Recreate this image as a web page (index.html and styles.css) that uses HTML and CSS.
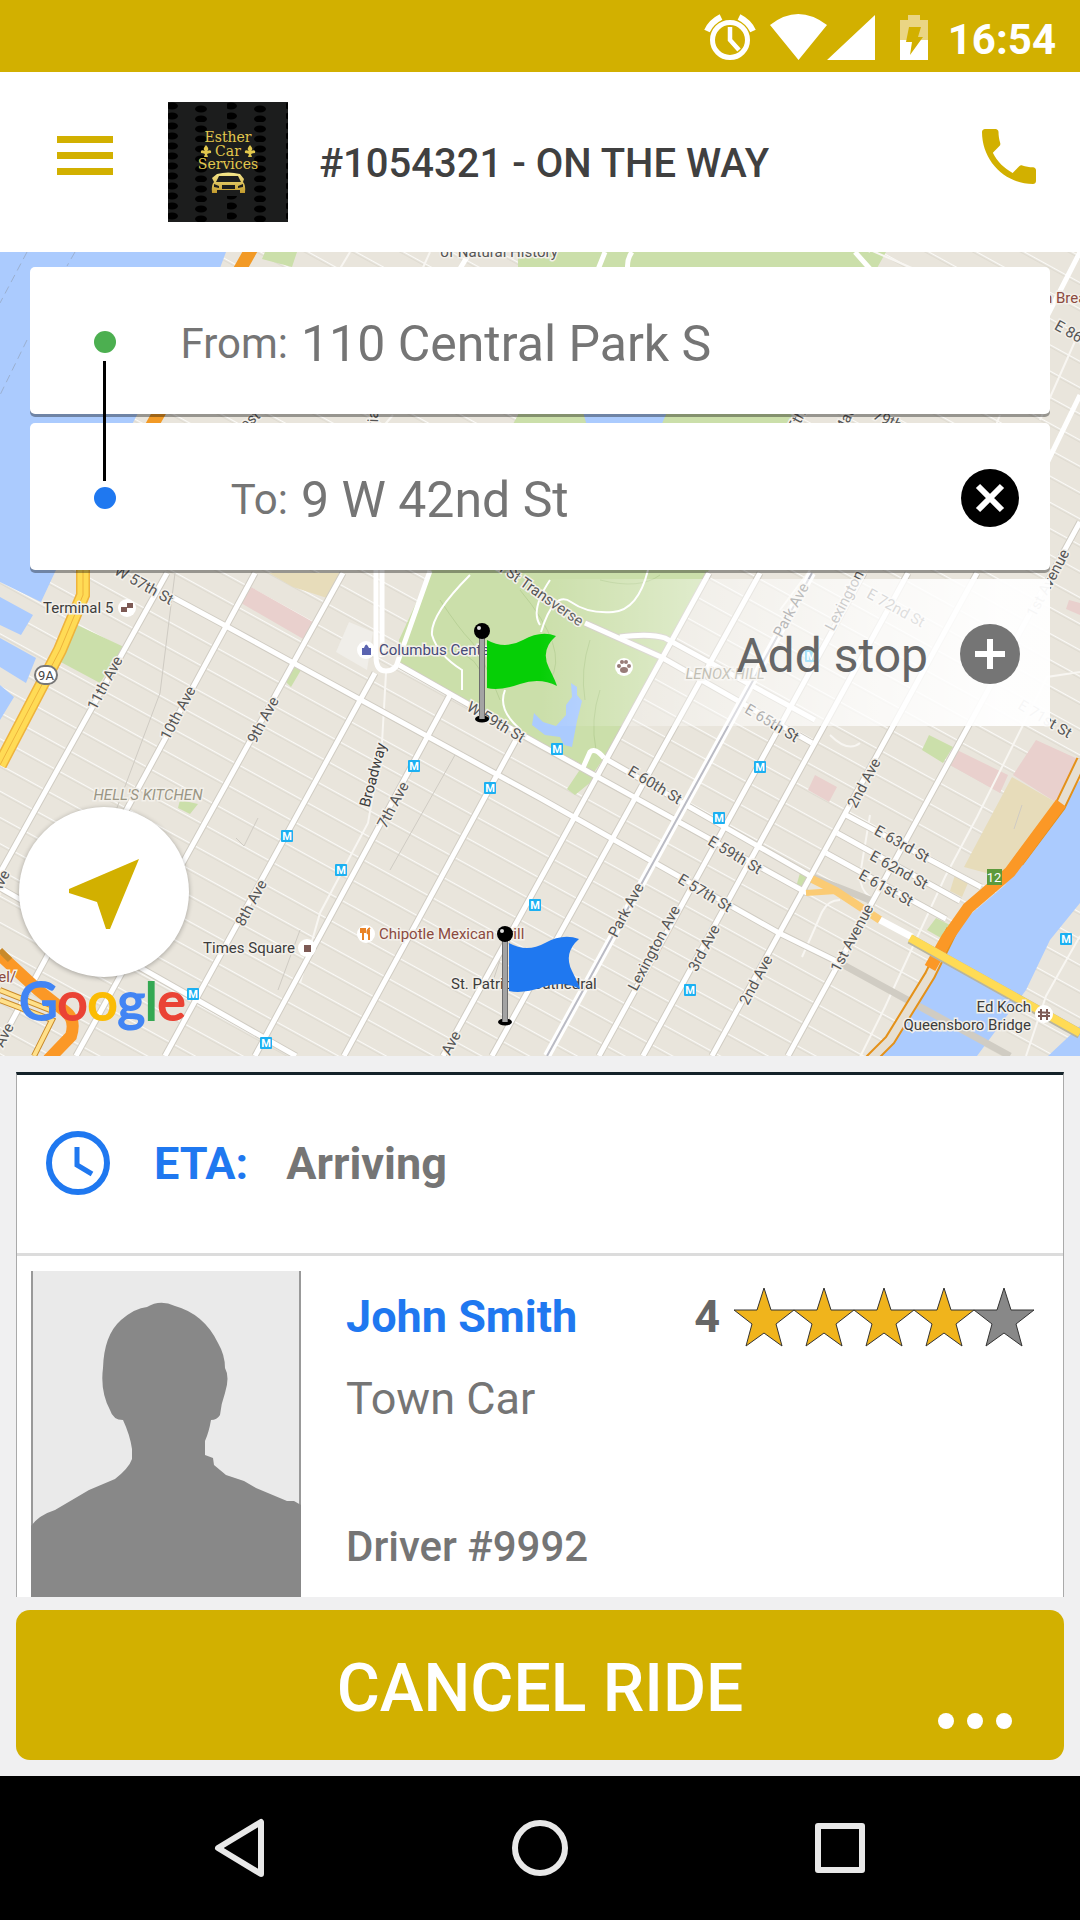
FILE: index.html
```html
<!DOCTYPE html>
<html lang="en">
<head>
  <meta charset="UTF-8">
  <meta name="viewport" content="width=device-width, initial-scale=1">
  <title>Esther Car Services - On the way</title>
  <link rel="stylesheet" href="styles.css">
</head>
<body>
  <div class="status-bar">
    <svg width="52" height="48" viewBox="0 0 52 48" fill="none" stroke="#fff">
      <circle cx="26" cy="27" r="17.500" stroke-width="5"/>
      <path d="M26 14v13l9 10" stroke-width="4.500"/>
      <path d="M3 18Q7 9 17 4M49 18Q45 9 35 4" stroke-width="6"/>
    </svg>
    <svg width="106" height="48" viewBox="0 0 106 48" fill="#fff">
      <path d="M0 12Q28-10 57 12L28.500 47zM57 47L105 2v45z"/>
    </svg>
    <svg class="battery" width="28" height="48" viewBox="0 0 28 48">
      <path d="M0 7h8V2h12v5h8v20H0z" fill="#ead584"/>
      <path d="M0 27h28v20H0z" fill="#fff"/>
      <path d="M9 14h12l-3 10h5L10 42l2-13H6z" fill="#d2b000"/>
    </svg>
    <span class="time">16:54</span>
  </div>

  <header>
    <button class="menu-btn" aria-label="Menu"><span></span><span></span><span></span></button>
    <svg class="brand" viewBox="0 0 120 120" role="img" aria-label="Esther Car Services">
      <defs>
        <pattern id="dots" width="59" height="20" patternUnits="userSpaceOnUse">
          <ellipse cx="4" cy="4" rx="6" ry="3.500"/>
          <ellipse cx="4" cy="14" rx="6" ry="3.500"/>
          <ellipse cx="33" cy="7" rx="6" ry="3.500"/>
          <ellipse cx="33" cy="17" rx="6" ry="3.500"/>
        </pattern>
        <linearGradient id="gold" x1="0" y1="0" x2="0" y2="1">
          <stop offset="0" stop-color="#f7e98e"/>
          <stop offset="1" stop-color="#c29a2c"/>
        </linearGradient>
      </defs>
      <rect width="120" height="120" fill="#1c1d1d"/>
      <rect width="120" height="120" fill="url(#dots)"/>
      <rect x="42" y="28" width="38" height="66" fill="#1c1d1d"/>
      <g class="brand-text" fill="#e3c84d" text-anchor="middle">
        <text x="60" y="40">Esther</text>
        <text x="60" y="54">Car</text>
        <text x="60" y="67">Services</text>
      </g>
      <g fill="#e3c84d">
        <path d="M38 43q4 4 1 6 5-2 4 2-2 0-4 1l1 3h-4l1-3q-2-1-4-1-1-4 4-2-3-2 1-6zM82 43q4 4 1 6 5-2 4 2-2 0-4 1l1 3h-4l1-3q-2-1-4-1-1-4 4-2-3-2 1-6z"/>
      </g>
      <path d="M49 72Q60 69 72 72L76 77 75 80Q78 83 77 91H72V88H49V91H44Q43 83 46 80L44 76zM51 74 48 80H73L70 74z" fill="url(#gold)" fill-rule="evenodd"/>
      <path d="M54 83h13v4H54zM46 82l5 2v2l-5-1zM75 82l-5 2v2l5-1z" fill="#1c1d1d"/>
    </svg>
    <h1>#1054321 - ON THE WAY</h1>
    <button class="call-btn" aria-label="Call driver">
      <svg width="54" height="55" viewBox="3 3 18 18" preserveAspectRatio="none" fill="#d2b000">
        <path d="M6.620 10.790c1.440 2.830 3.760 5.140 6.590 6.590l2.200-2.200c.27-.27.67-.36 1.020-.24 1.120.37 2.330.57 3.570.57.55 0 1 .45 1 1V20c0 .55-.45 1-1 1-9.390 0-17-7.610-17-17 0-.55.45-1 1-1h3.500c.55 0 1 .45 1 1 0 1.250.2 2.450.57 3.570.11.35.03.74-.25 1.020l-2.200 2.200z"/>
      </svg>
    </button>
  </header>

  <main class="map">
    <svg class="map-canvas" viewBox="0 252 1080 804" preserveAspectRatio="xMidYMid slice">
      <defs>
        <pattern id="streets" width="400" height="23" patternUnits="userSpaceOnUse" patternTransform="translate(224 625) rotate(28.8)">
          <path d="M0 1h400" stroke="#d6d1c6" stroke-width="3"/>
          <path d="M0 0.500h400" stroke="#fbfaf7" stroke-width="2"/>
        </pattern>
        <g id="metro">
          <rect x="-6" y="-6" width="12" height="12" rx="1" fill="#1cb0f2"/>
          <text class="metro-m" y="4" text-anchor="middle">M</text>
        </g>
        <g id="pin">
          <ellipse cy="88" rx="7" ry="3.500"/>
          <path d="M-3 5h5v83h-5z" fill="#a3a3a3"/>
          <path d="M-3 5h1v83h-1zM2 5h1v83h-1z" fill="#6e6e6e"/>
          <circle r="8"/>
          <circle cx="-3" cy="-3" r="2" fill="#ddd"/>
        </g>
      </defs>

      <rect y="252" width="1080" height="804" fill="#e9e5dc"/>
      <rect y="252" width="1080" height="804" fill="url(#streets)"/>

      <!-- parks and blocks -->
      <g fill="#cbdfaa">
        <path d="M518 252H886L705 577 604 758 590 778 573 790 590 768 540 745 451 692 399 665V640L430 573 518 415z"/>
        <path d="M265 252h32l-5 15-30-8zM77 625l47 22-24 36-43-23zM293 667l8 3-10 17-5-5zM180 800l18 4-8 10-12-6zM929 735l24 12-10 16-21-13zM800 873h11l-6 20-9-6zM936 918l14 7-9 13-14-8zM597 777l-22 18-8-6 20-30z"/>
      </g>
      <g fill="#e9d0cd">
        <path d="M251 587l62 35-8 18-64-37zM815 775l22 12-8 15-21-12zM957 750l51 25-8 18-50-28zM1036 740l44 20-23 43-44-28zM1069 600l11 3v12l-14-6z"/>
      </g>
      <g fill="#e7dcba">
        <path d="M269 573h72l-14 25-34-11zM1012 777l45 26-56 74-37-10zM955 875l13 8-6 14-12-6z"/>
      </g>
      <path d="M349 622l24 10-6 38-31-18z" fill="#f0eee9"/>
      <g fill="none" stroke="#b9d197">
        <path d="M440 600q20 30 30 40t30 60M520 590q50 60 30 90M600 580q40 10 60-5M590 640q-10 30-5 60M440 650q30 0 40 20M600 690q-10 30-4 60"/>
      </g>

      <!-- water -->
      <g fill="#abcbfe">
        <path d="M0 252H226L220 268 137 415 55 572 41 602 0 582zM0 597l33 18-12 20-21-10zM0 638l36 20-10 25-26-16zM0 685l14 12-14 23z"/>
        <path d="M583 412h84l-6 14h-74z"/>
        <path d="M571 683l6 4v8l5 6-5 20-5 26-8-2-4-8-15-2-13-10 2-12 9 9 13 4 10-11v-10l6-8z"/>
        <path d="M1080 780L1060 807 1005 885 952 930 930 970 880 1056H977L1026 990 1050 940 1080 903zM1048 1056l32-30v30z"/>
      </g>
      <g fill="none" stroke="#9bb0d0" stroke-dasharray="8 5">
        <path d="M27 252L0 303M27 340L0 395M75 252l-8 14"/>
      </g>
      <g fill="none" stroke="#cfcbc3">
        <path d="M175 573l-15 120-45 120M258 818l-14 28-8-8M455 755l-65 115M300 930l-22 60M500 960l-10 30M1022 805l-8 24"/>
      </g>

      <!-- side roads -->
      <g class="road minor">
        <path d="M386 673l-4 70-14 80-48 90-20 70M350 252l-12 20M430 252l-9 20M393 415l-12 14M810 570l-30 40M1080 672l-33 5-25 50-45 90-32 60-60 130-25 50M1080 330l-40 90M870 252l-9-6 60 26M830 735q18 18 30 8M1026 1056l20-60 34-60M1000 415l-40 100"/>
        <path d="M870 815l-10 60q0 15 10 22M840 900q-12 0-18 12l-20 45"/>
      </g>

      <!-- avenues and main streets -->
      <g class="road edge">
        <path d="M167 573L0 873M255 573L0 1043M343 573L76 1056M375 673L165 1056M451 693L255 1056M516 740L344 1056M709 573L443 1056M760 573L492 1056M864 573L599 1056M908 573L643 1056M977 573L712 1056M1080 522L788 1056"/>
        <path d="M172 597L224 625 540 798 779 933 840 963 1010 1056M399 665L540 745 807 893M604 758L812 877 870 900M0 888L296 1056M585 623L661 657 812 743M620 637q30-4 45 1l150 82M846 815l135 72M837 833l123 68M826 853l120 66"/>
      </g>
      <g class="road">
        <path d="M167 573L0 873M255 573L0 1043M343 573L76 1056M375 673L165 1056M451 693L255 1056M516 740L344 1056M709 573L443 1056M760 573L492 1056M864 573L599 1056M908 573L643 1056M977 573L712 1056M1080 522L788 1056M1080 252L1040 330M1080 395L1000 560"/>
        <path d="M172 597L224 625 540 798 779 933 840 963M399 665L540 745 807 893M604 758L812 877M0 888L296 1056M585 623L661 657 812 743M620 637q30-4 45 1l150 82M846 815l135 72M837 833l123 68M826 853l120 66"/>
        <path d="M376 567v90q0 14 10 14t12-10l32-90M382 567v90M582 770l8-18q5-5 14 6M470 252l-12 20M605 252l-8 20M632 252q-6 8-4 20M855 252l16 18"/>
        <path d="M550 580q-20 30-10 45M470 575q-40 40-38 60 6 20 30 35v20M505 690q-8 20 16 40M648 570q-10 40-35 42t-42-10-30 30" stroke-width="2"/>
      </g>
      <path class="road park-ave" d="M812 573L547 1056"/>
      <path d="M812 573L547 1056" stroke="#babbc4" stroke-width="2"/>

      <!-- highways -->
      <g fill="none">
        <path d="M252 248L155 420 88 540" stroke="#f29a26" stroke-width="13"/>
        <path d="M83 565v30L60 650 0 765" stroke="#eeb33c" stroke-width="14"/>
        <path d="M83 565v30L60 650 0 765" stroke="#ffdb55" stroke-width="11"/>
        <path d="M83 565v30L60 650 0 765" stroke="#eeb33c"/>
        <path d="M0 955L38 990 66 1012q10 8 5 24L48 1060" stroke="#fb9826" stroke-width="12"/>
        <path d="M0 950l10 10M0 990l55 22M0 1000l52 20-18 36" stroke="#c98a2b" stroke-width="6"/>
        <path d="M0 990l55 22M0 1000l52 20-18 36" stroke="#ffe08a" stroke-width="4"/>
        <path d="M1082 760L1060 806 1018 862M952 930L930 975 890 1040 870 1060" stroke="#e49119" stroke-width="12"/>
        <path d="M1082 760L1060 806 1018 862M952 930L930 975 890 1040 870 1060" stroke="#e6dfd2" stroke-width="8"/>
        <path d="M1061 803L1010 872 968 908 947 938 930 968" stroke="#fb9826" stroke-width="12"/>
        <path d="M812 879L836 891 880 920" stroke="#fbcb74" stroke-width="8"/>
        <path d="M806 893l30-2" stroke="#fbcb74" stroke-width="6"/>
        <path d="M880 920l32 17" stroke="#fff" stroke-width="7"/>
        <path d="M910 939l170 95" stroke="#b8b5a0" stroke-width="10"/>
        <path d="M910 938l170 95" stroke="#ffdb55" stroke-width="8"/>
      </g>

      <!-- street names -->
      <g class="label" text-anchor="middle">
        <text x="499" y="257">of Natural History</text>
        <text transform="translate(144 585) rotate(29)" y="5">W 57th St</text>
        <text transform="translate(105 683) rotate(-62)" y="5">11th Ave</text>
        <text transform="translate(178 713) rotate(-62)" y="5">10th Ave</text>
        <text transform="translate(263 720) rotate(-62)" y="5">9th Ave</text>
        <text class="dark" transform="translate(373 775) rotate(-75)" y="5">Broadway</text>
        <text transform="translate(393 805) rotate(-62)" y="5">7th Ave</text>
        <text transform="translate(251 903) rotate(-62)" y="5">8th Ave</text>
        <text transform="translate(451 1043) rotate(-62)" y="5">Ave</text>
        <text transform="translate(4 1035) rotate(-62)" y="5">Ave</text>
        <text transform="translate(0 882) rotate(-62)" y="5">Ave</text>
        <text transform="translate(496 722) rotate(31)" y="5">W 59th St</text>
        <text transform="translate(531 587) rotate(35)" y="5">65th St Transverse</text>
        <text transform="translate(791 610) rotate(-62)" y="5">Park Ave</text>
        <text transform="translate(851 588) rotate(-62)" y="5">Lexington Ave</text>
        <text transform="translate(896 608) rotate(29)" y="5">E 72nd St</text>
        <text transform="translate(772 723) rotate(31)" y="5">E 65th St</text>
        <text transform="translate(655 785) rotate(31)" y="5">E 60th St</text>
        <text transform="translate(735 855) rotate(31)" y="5">E 59th St</text>
        <text transform="translate(705 893) rotate(31)" y="5">E 57th St</text>
        <text transform="translate(864 783) rotate(-62)" y="5">2nd Ave</text>
        <text transform="translate(902 844) rotate(29)" y="5">E 63rd St</text>
        <text transform="translate(899 870) rotate(29)" y="5">E 62nd St</text>
        <text transform="translate(886 888) rotate(29)" y="5">E 61st St</text>
        <text transform="translate(626 910) rotate(-62)" y="5">Park Ave</text>
        <text transform="translate(654 948) rotate(-62)" y="5">Lexington Ave</text>
        <text transform="translate(704 948) rotate(-62)" y="5">3rd Ave</text>
        <text transform="translate(756 980) rotate(-62)" y="5">2nd Ave</text>
        <text transform="translate(852 938) rotate(-62)" y="5">1st Avenue</text>
        <text transform="translate(1048 583) rotate(-62)" y="5">1st Avenue</text>
        <text transform="translate(1045 719) rotate(31)" y="5">E 71st St</text>
        <text transform="translate(1082 339) rotate(29)" y="5">E 86th St</text>
        <text class="area" x="148" y="800">HELL'S KITCHEN</text>
        <text class="area" x="725" y="679">LENOX HILL</text>
        <text transform="translate(250 420) rotate(-40)" y="5">est</text>
        <text transform="translate(373 420) rotate(-88)" y="5">via</text>
        <text transform="translate(797 420) rotate(-62)" y="5">5th</text>
        <text transform="translate(845 420) rotate(-62)" y="5">Mad</text>
        <text transform="translate(888 420) rotate(25)" y="5">79th</text>
      </g>

      <!-- places -->
      <g fill="#fff">
        <circle cx="127" cy="608" r="9"/>
        <circle cx="366" cy="650" r="9"/>
        <circle cx="366" cy="934" r="9"/>
        <circle cx="307" cy="948" r="9"/>
        <circle cx="624" cy="667" r="9"/>
        <circle cx="1044" cy="1014" r="9"/>
      </g>
      <path d="M121 607h6v5h-6zM127 603h6v5h-6zM304 945h7v7h-7z" fill="#7d5a55"/>
      <path d="M362 648h9v7h-9zM364 648q2-7 5 0" fill="#5a64b0"/>
      <path d="M363 928v12M361 928v4h4v-4M369 928v12M370 928q-4 3-2 6" stroke="#e98225" stroke-width="2" fill="none"/>
      <g fill="#7d5a55">
        <circle cx="619" cy="666" r="2"/>
        <circle cx="622" cy="662" r="2"/>
        <circle cx="626" cy="662" r="2"/>
        <circle cx="629" cy="666" r="2"/>
        <ellipse cx="624" cy="670" rx="4" ry="3"/>
      </g>
      <path d="M1041 1009v11M1047 1009v11M1038 1016h12M1038 1012l12 1" stroke="#7d5a55" stroke-width="2"/>
      <g class="label place">
        <text x="43" y="613">Terminal 5</text>
        <text class="shop" x="379" y="655">Columbus Center</text>
        <text class="food" x="379" y="939">Chipotle Mexican Grill</text>
        <text x="451" y="989">St. Patrick's Cathedral</text>
        <text x="295" y="953" text-anchor="end">Times Square</text>
        <text x="1031" y="1012" text-anchor="end">Ed Koch</text>
        <text x="1031" y="1030" text-anchor="end">Queensboro Bridge</text>
        <text class="food" x="1044" y="303">n Bread</text>
        <text class="food" x="-10" y="982">nel/</text>
      </g>
      <rect x="35" y="666" width="22" height="18" rx="9" fill="#fff" stroke="#777" stroke-width="2"/>
      <text class="shield" x="46" y="680" text-anchor="middle">9A</text>
      <rect x="987" y="869" width="15" height="16" fill="#5c9a3c"/>
      <text class="exit" x="994" y="882" text-anchor="middle">12</text>

      <use href="#metro" x="414" y="766"/>
      <use href="#metro" x="490" y="788"/>
      <use href="#metro" x="287" y="836"/>
      <use href="#metro" x="341" y="870"/>
      <use href="#metro" x="193" y="994"/>
      <use href="#metro" x="266" y="1043"/>
      <use href="#metro" x="535" y="905"/>
      <use href="#metro" x="557" y="749"/>
      <use href="#metro" x="760" y="767"/>
      <use href="#metro" x="719" y="818"/>
      <use href="#metro" x="690" y="990"/>
      <use href="#metro" x="1066" y="939"/>
      <use href="#metro" x="811" y="656"/>

      <!-- pickup and drop-off flags -->
      <use href="#pin" x="482" y="631"/>
      <path d="M487 640Q505 650 523 640T556 636Q540 650 549 668 556 682 557 686 540 677 520 684T487 688Z" fill="#06cf06"/>
      <use href="#pin" x="505" y="934"/>
      <path d="M509 943Q527 953 545 943T579 939Q563 953 572 971 579 985 580 989 563 980 543 987T509 991Z" fill="#1f78f0"/>

      <text class="google" x="19" y="1020"><tspan class="g-blue">G</tspan><tspan class="g-red">o</tspan><tspan class="g-yellow">o</tspan><tspan class="g-blue">g</tspan><tspan class="g-green">l</tspan><tspan class="g-red">e</tspan></text>
    </svg>

    <form class="route">
      <div class="stop">
        <span class="dot from"></span>
        <label for="from">From:</label>
        <input type="text" id="from" value="110 Central Park S">
      </div>
      <div class="stop">
        <span class="dot to"></span>
        <label for="to">To:</label>
        <input type="text" id="to" value="9 W 42nd St">
        <button type="button" class="round-btn" aria-label="Remove stop">
          <svg width="60" height="60" viewBox="0 0 60 60">
            <circle cx="30" cy="30" r="29"/>
            <path d="M18 18l24 24M42 18L18 42" stroke="#fff" stroke-width="6"/>
          </svg>
        </button>
      </div>
      <button type="button" class="add-stop">
        <span>Add stop</span>
        <svg width="60" height="60" viewBox="0 0 60 60">
          <circle cx="30" cy="30" r="30" fill="#757575"/>
          <path d="M30 15v30M15 30h30" stroke="#fff" stroke-width="6"/>
        </svg>
      </button>
    </form>

    <button class="locate-btn" aria-label="My location">
      <svg width="70" height="70" viewBox="0 0 70 70" fill="#d2b000"><path d="M70 0L41 70H37L28 43 0 34V30z"/></svg>
    </button>
  </main>

  <section class="ride">
    <div class="ride-card">
      <div class="eta">
        <svg width="64" height="64" viewBox="0 0 64 64" fill="none" stroke="#1f78f0">
          <circle cx="32" cy="32" r="29" stroke-width="6"/>
          <path d="M31 16v18l15 9" stroke-width="5"/>
        </svg>
        <strong class="eta-label">ETA:</strong>
        <strong class="eta-value">Arriving</strong>
      </div>
      <div class="driver">
        <svg class="photo" viewBox="0 0 270 326" role="img" aria-label="Driver photo">
          <rect width="270" height="326" fill="#eaeaea"/>
          <path d="M1 0v270M269 0v270" stroke="#999" stroke-width="2"/>
          <path d="M0 255Q8 244 24 239L58 219 84 208Q98 197 101 188V178Q99 164 92 149 82 149 79 139 69 120 72 97 73 64 90 49 104 37 116 36 129 28 144 35 173 43 187 72 194 84 194 97 199 106 194 122 190 133 189 144 186 149 180 149 178 161 174 170V184L182 187 183 194 195 204 213 210 225 217 256 230H263L270 234V326H0Z" fill="#888"/>
        </svg>
        <div class="driver-info">
          <div class="driver-top">
            <h2>John Smith</h2>
            <div class="rating" role="img" aria-label="Rated 4 of 5">
              <span>4</span>
              <svg width="300" height="60" viewBox="0 0 300 60">
                <defs><path id="star" d="M30 1L37 23H60L42 37 48 59 30 46 12 59 18 37 0 23H23z" stroke="#333" stroke-width="1"/></defs>
                <use href="#star" fill="#f0b41c"/>
                <use href="#star" x="60" fill="#f0b41c"/>
                <use href="#star" x="120" fill="#f0b41c"/>
                <use href="#star" x="180" fill="#f0b41c"/>
                <use href="#star" x="240" fill="#888"/>
              </svg>
            </div>
          </div>
          <p class="car">Town Car</p>
          <p class="driver-id">Driver #9992</p>
        </div>
      </div>
    </div>

    <div class="actions">
      <button class="cancel-btn">CANCEL RIDE</button>
      <button class="more-btn" aria-label="More"><span></span><span></span><span></span></button>
    </div>
  </section>

  <nav class="system-nav">
    <button aria-label="Back">
      <svg width="60" height="60" viewBox="0 0 60 60"><path d="M51 4V56L8 30z"/></svg>
    </button>
    <button aria-label="Home">
      <svg width="60" height="60" viewBox="0 0 60 60"><circle cx="30" cy="30" r="25"/></svg>
    </button>
    <button aria-label="Recent apps">
      <svg width="60" height="60" viewBox="0 0 60 60"><rect x="8" y="8" width="44" height="44"/></svg>
    </button>
  </nav>
</body>
</html>
```
FILE: styles.css
```css
* { margin: 0; padding: 0; box-sizing: border-box; }
body {
  font-family: Roboto, sans-serif;
  background: #f0f0f1;
  color: #757575;
  min-height: 100vh;
  display: flex;
  flex-direction: column;
}
button {
  font-family: inherit;
  border: none;
  background: none;
  cursor: pointer;
}
svg { display: block; flex-shrink: 0; }

.status-bar {
  display: flex;
  align-items: center;
  justify-content: flex-end;
  gap: 14px;
  height: 72px;
  padding: 2px 24px 0 20px;
  background: #d2b000;
  color: #fff;
}
.status-bar .battery { margin-left: 10px; }
.time {
  font-size: 42px;
  font-weight: 700;
  line-height: 48px;
  margin-left: 6px;
  padding-top: 6px;
}

header {
  display: flex;
  align-items: center;
  height: 180px;
  padding: 0 44px 0 57px;
  background: #fff;
}
.menu-btn {
  display: flex;
  flex-direction: column;
  gap: 9px;
  width: 56px;
  margin-bottom: 13px;
}
.menu-btn span { height: 7px; background: #d2b000; }
.brand { width: 120px; height: 120px; margin: 0 31px 0 55px; }
.brand-text { font-family: "DejaVu Serif", serif; font-size: 14px; }
header h1 {
  flex: 1;
  padding-top: 4px;
  font-size: 40px;
  font-weight: 500;
  line-height: 48px;
  color: #404040;
}
.call-btn { margin-bottom: 11px; }

.map {
  flex: 1;
  position: relative;
  min-height: 804px;
  padding: 15px 30px;
  overflow: hidden;
}
.map-canvas {
  position: absolute;
  inset: 0;
  width: 100%;
  height: 100%;
}
.road { fill: none; stroke: #fff; stroke-width: 5; }
.road.edge { stroke: #d0ccc3; stroke-width: 7; }
.road.minor { stroke: #f8f6f2; stroke-width: 2; }
.road.park-ave { stroke-width: 8; }
.label {
  font-size: 15px;
  fill: #555;
  stroke: #f3f0ea;
  stroke-width: 3px;
  paint-order: stroke;
}
.label .dark, .label.place { fill: #3c3c3c; }
.label .area { font-style: italic; fill: #9a9685; }
.label .shop { fill: #474b78; }
.label .food { fill: #8b4a40; }
.metro-m { font-size: 11px; font-weight: 700; fill: #fff; }
.shield { font-size: 13px; fill: #444; }
.exit { font-size: 13px; fill: #fff; }
.google { font-family: Lato, sans-serif; font-size: 53px; stroke-width: 2px; }
.g-blue { fill: #4285f4; stroke: #4285f4; }
.g-red { fill: #ea4335; stroke: #ea4335; }
.g-yellow { fill: #fbbc05; stroke: #fbbc05; }
.g-green { fill: #34a853; stroke: #34a853; }

.route {
  position: relative;
  display: flex;
  flex-direction: column;
  gap: 9px;
}
/* line joining the two stops */
.route::before {
  content: "";
  position: absolute;
  z-index: 1;
  left: 73px;
  top: 94px;
  width: 3px;
  height: 120px;
  background: #000;
}
.stop, .add-stop {
  display: flex;
  align-items: center;
  height: 147px;
  padding: 2px 30px 0 64px;
}
.stop {
  background: #fff;
  border-radius: 5px;
  box-shadow: 0 3px 0 rgba(0, 0, 0, 0.35);
}
.dot { width: 22px; height: 22px; border-radius: 50%; }
.dot.from { background: #4caf50; }
.dot.to { background: #1f78f0; }
.stop label {
  width: 172px;
  padding-top: 4px;
  font-size: 42px;
  text-align: right;
}
.stop input {
  flex: 1;
  min-width: 0;
  margin-left: 13px;
  padding-top: 4px;
  border: none;
  outline: none;
  background: none;
  font-family: inherit;
  font-size: 50px;
  color: #757575;
}
.add-stop {
  justify-content: flex-end;
  gap: 32px;
  font-size: 48px;
  color: #666;
  background: linear-gradient(to right, rgba(255, 255, 255, 0) 50%, rgba(255, 255, 255, 0.45) 68%, rgba(255, 255, 255, 0.75) 82%, rgba(255, 255, 255, 0.95) 95%);
}
.add-stop span { padding-top: 4px; }
.locate-btn {
  position: absolute;
  left: 19px;
  bottom: 79px;
  display: flex;
  align-items: center;
  justify-content: center;
  width: 170px;
  height: 170px;
  padding-top: 4px;
  border-radius: 50%;
  background: #fff;
  box-shadow: 0 1px 5px rgba(0, 0, 0, 0.3);
}

.ride { padding: 16px; }
.ride-card {
  background: #fff;
  border: 1px solid #aaa;
  border-top: 3px solid #14222a;
  border-bottom: none;
}
.eta {
  display: flex;
  align-items: center;
  height: 181px;
  padding: 0 29px 2px;
  border-bottom: 3px solid #dcdcdc;
  font-size: 45px;
}
.eta-label { margin-left: 44px; color: #1f78f0; }
.eta-value { margin-left: 38px; }
.driver { display: flex; padding: 15px 29px 0 14px; }
.photo { width: 270px; height: 326px; }
.driver-info {
  flex: 1;
  padding: 16px 0 0 45px;
  line-height: 60px;
}
.driver-top { display: flex; justify-content: space-between; }
.driver-info h2 { font-size: 45px; font-weight: 700; color: #1f78f0; }
.rating { display: flex; gap: 14px; font-size: 45px; font-weight: 700; color: #666; }
.car { margin-top: 22px; font-size: 45px; }
.driver-id { margin-top: 88px; font-size: 42px; font-weight: 500; }

.actions { position: relative; margin-top: 13px; }
.cancel-btn {
  display: block;
  width: 100%;
  height: 150px;
  padding-top: 6px;
  border-radius: 14px;
  background: #d2b000;
  color: #fff;
  font-size: 66px;
  font-weight: 500;
}
.more-btn {
  position: absolute;
  right: 52px;
  bottom: 31px;
  display: flex;
  gap: 13px;
}
.more-btn span { width: 16px; height: 16px; border-radius: 50%; background: #fff; }

.system-nav {
  display: flex;
  justify-content: center;
  gap: 240px;
  align-items: center;
  height: 144px;
  background: #000;
}
.system-nav svg { fill: none; stroke: #e8e8e8; stroke-width: 6; stroke-linejoin: round; }
```
